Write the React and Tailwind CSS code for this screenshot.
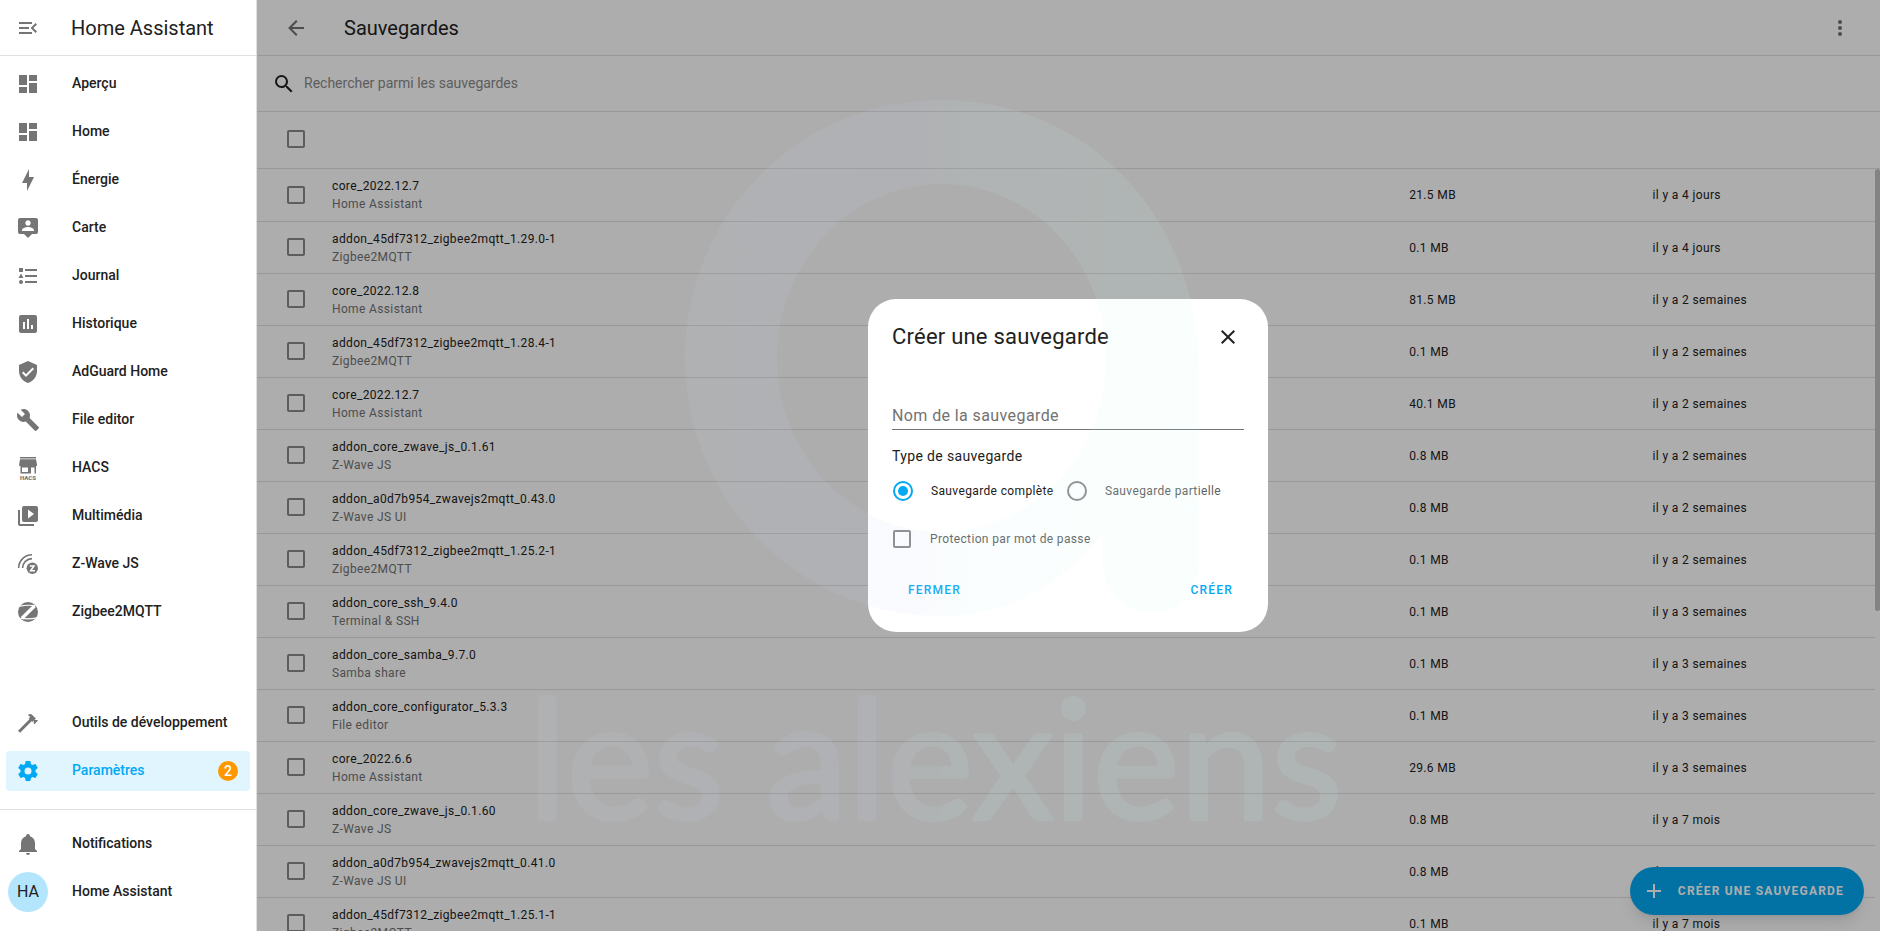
import { useState } from "react";

const ICONS = {
  menuOpen:
    "M21,15.61L19.59,17L14.58,12L19.59,7L21,8.39L17.44,12L21,15.61M3,6H16V8H3V6M3,13V11H13V13H3M3,18V16H16V18H3Z",
  dashboard: "M13,3V9H21V3M13,21H21V11H13M3,21H11V15H3M3,13H11V3H3V13Z",
  bolt: "M11 15H6L13 1V9H18L11 23V15Z",
  map: "M20,2H4A2,2 0 0,0 2,4V16A2,2 0 0,0 4,18H8L12,22L16,18H20A2,2 0 0,0 22,16V4C22,2.89 21.1,2 20,2M12,4.3C13.5,4.3 14.7,5.5 14.7,7C14.7,8.5 13.5,9.7 12,9.7C10.5,9.7 9.3,8.5 9.3,7C9.3,5.5 10.5,4.3 12,4.3M18,15H6V14.1C6,12.1 10,11 12,11C14,11 18,12.1 18,14.1V15Z",
  list: "M5,9.5L7.5,14H2.5L5,9.5M3,4H7V8H3V4M5,20A2,2 0 0,0 7,18A2,2 0 0,0 5,16A2,2 0 0,0 3,18A2,2 0 0,0 5,20M9,5V7H21V5H9M9,19H21V17H9V19M9,13H21V11H9V13Z",
  chart:
    "M19,3H5C3.9,3 3,3.9 3,5V19C3,20.1 3.9,21 5,21H19C20.1,21 21,20.1 21,19V5C21,3.9 20.1,3 19,3M9,17H7V10H9V17M13,17H11V7H13V17M17,17H15V13H17V17Z",
  shield:
    "M10,17L6,13L7.41,11.59L10,14.17L16.59,7.58L18,9M12,1L3,5V11C3,16.55 6.84,21.74 12,23C17.16,21.74 21,16.55 21,11V5L12,1Z",
  wrench:
    "M22.7,19L13.6,9.9C14.5,7.6 14,4.9 12.1,3C10.1,1 7.1,0.6 4.7,1.7L9,6L6,9L1.6,4.7C0.4,7.1 0.9,10.1 2.9,12.1C4.8,14 7.5,14.5 9.8,13.6L18.9,22.7C19.3,23.1 19.9,23.1 20.3,22.7L22.6,20.4C23.1,20 23.1,19.3 22.7,19Z",
  media:
    "M4,6H2V20A2,2 0 0,0 4,22H18V20H4V6M20,2H8A2,2 0 0,0 6,4V16A2,2 0 0,0 8,18H20A2,2 0 0,0 22,16V4A2,2 0 0,0 20,2M12,14.5V5.5L18,10L12,14.5Z",
  hammer:
    "M2 19.63L13.43 8.2L12.72 7.5L14.14 6.07L12 3.89C13.2 2.7 15.09 2.7 16.27 3.89L19.87 7.5L18.45 8.91H21.29L22 9.62L18.45 13.21L17.74 12.5V9.62L16.27 11.04L15.56 10.33L4.13 21.76L2 19.63Z",
  cog: "M12,15.5A3.5,3.5 0 0,1 8.5,12A3.5,3.5 0 0,1 12,8.5A3.5,3.5 0 0,1 15.5,12A3.5,3.5 0 0,1 12,15.5M19.43,12.97C19.47,12.65 19.5,12.33 19.5,12C19.5,11.67 19.47,11.34 19.43,11L21.54,9.37C21.73,9.22 21.78,8.95 21.66,8.73L19.66,5.27C19.54,5.05 19.27,4.96 19.05,5.05L16.56,6.05C16.04,5.66 15.5,5.32 14.87,5.07L14.5,2.42C14.46,2.18 14.25,2 14,2H10C9.75,2 9.54,2.18 9.5,2.42L9.13,5.07C8.5,5.32 7.96,5.66 7.44,6.05L4.95,5.05C4.73,4.96 4.46,5.05 4.34,5.27L2.34,8.73C2.21,8.95 2.27,9.22 2.46,9.37L4.57,11C4.53,11.34 4.5,11.67 4.5,12C4.5,12.33 4.53,12.65 4.57,12.97L2.46,14.63C2.27,14.78 2.21,15.05 2.34,15.27L4.34,18.73C4.46,18.95 4.73,19.03 4.95,18.95L7.44,17.94C7.96,18.34 8.5,18.68 9.13,18.93L9.5,21.58C9.54,21.82 9.75,22 10,22H14C14.25,22 14.46,21.82 14.5,21.58L14.87,18.93C15.5,18.67 16.04,18.34 16.56,17.94L19.05,18.95C19.27,19.03 19.54,18.95 19.66,18.73L21.66,15.27C21.78,15.05 21.73,14.78 21.54,14.63L19.43,12.97Z",
  bell: "M21,19V20H3V19L5,17V11C5,7.9 7.03,5.17 10,4.29C10,4.19 10,4.1 10,4A2,2 0 0,1 12,2A2,2 0 0,1 14,4C14,4.1 14,4.19 14,4.29C16.97,5.17 19,7.9 19,11V17L21,19M14,21A2,2 0 0,1 12,23A2,2 0 0,1 10,21",
  back: "M20,11V13H8L13.5,18.5L12.08,19.92L4.16,12L12.08,4.08L13.5,5.5L8,11H20Z",
  search:
    "M9.5,3A6.5,6.5 0 0,1 16,9.5C16,11.11 15.41,12.59 14.44,13.73L14.71,14H15.5L20.5,19L19,20.5L14,15.5V14.71L13.73,14.44C12.59,15.41 11.11,16 9.5,16A6.5,6.5 0 0,1 3,9.5A6.5,6.5 0 0,1 9.5,3M9.5,5C7,5 5,7 5,9.5C5,12 7,14 9.5,14C12,14 14,12 14,9.5C14,7 12,5 9.5,5Z",
  dots: "M12,16A2,2 0 0,1 14,18A2,2 0 0,1 12,20A2,2 0 0,1 10,18A2,2 0 0,1 12,16M12,10A2,2 0 0,1 14,12A2,2 0 0,1 12,14A2,2 0 0,1 10,12A2,2 0 0,1 12,10M12,4A2,2 0 0,1 14,6A2,2 0 0,1 12,8A2,2 0 0,1 10,6A2,2 0 0,1 12,4Z",
  close:
    "M19,6.41L17.59,5L12,10.59L6.41,5L5,6.41L10.59,12L5,17.59L6.41,19L12,13.41L17.59,19L19,17.59L13.41,12L19,6.41Z",
  plus: "M19,13H13V19H11V13H5V11H11V5H13V11H19V13Z",
};

const NAV_MAIN = [
  { label: "Aperçu", icon: "dashboard" },
  { label: "Home", icon: "dashboard" },
  { label: "Énergie", icon: "bolt" },
  { label: "Carte", icon: "map" },
  { label: "Journal", icon: "list" },
  { label: "Historique", icon: "chart" },
  { label: "AdGuard Home", icon: "shield" },
  { label: "File editor", icon: "wrench" },
  { label: "HACS", icon: "hacs" },
  { label: "Multimédia", icon: "media" },
  { label: "Z-Wave JS", icon: "zwave" },
  { label: "Zigbee2MQTT", icon: "zigbee" },
];

const BACKUPS = [
  { name: "core_2022.12.7", source: "Home Assistant", size: "21.5 MB", date: "il y a 4 jours" },
  { name: "addon_45df7312_zigbee2mqtt_1.29.0-1", source: "Zigbee2MQTT", size: "0.1 MB", date: "il y a 4 jours" },
  { name: "core_2022.12.8", source: "Home Assistant", size: "81.5 MB", date: "il y a 2 semaines" },
  { name: "addon_45df7312_zigbee2mqtt_1.28.4-1", source: "Zigbee2MQTT", size: "0.1 MB", date: "il y a 2 semaines" },
  { name: "core_2022.12.7", source: "Home Assistant", size: "40.1 MB", date: "il y a 2 semaines" },
  { name: "addon_core_zwave_js_0.1.61", source: "Z-Wave JS", size: "0.8 MB", date: "il y a 2 semaines" },
  { name: "addon_a0d7b954_zwavejs2mqtt_0.43.0", source: "Z-Wave JS UI", size: "0.8 MB", date: "il y a 2 semaines" },
  { name: "addon_45df7312_zigbee2mqtt_1.25.2-1", source: "Zigbee2MQTT", size: "0.1 MB", date: "il y a 2 semaines" },
  { name: "addon_core_ssh_9.4.0", source: "Terminal & SSH", size: "0.1 MB", date: "il y a 3 semaines" },
  { name: "addon_core_samba_9.7.0", source: "Samba share", size: "0.1 MB", date: "il y a 3 semaines" },
  { name: "addon_core_configurator_5.3.3", source: "File editor", size: "0.1 MB", date: "il y a 3 semaines" },
  { name: "core_2022.6.6", source: "Home Assistant", size: "29.6 MB", date: "il y a 3 semaines" },
  { name: "addon_core_zwave_js_0.1.60", source: "Z-Wave JS", size: "0.8 MB", date: "il y a 7 mois" },
  { name: "addon_a0d7b954_zwavejs2mqtt_0.41.0", source: "Z-Wave JS UI", size: "0.8 MB", date: "il y a 7 mois" },
  { name: "addon_45df7312_zigbee2mqtt_1.25.1-1", source: "Zigbee2MQTT", size: "0.1 MB", date: "il y a 7 mois" },
];

function Icon({ name, className = "size-6" }) {
  if (name === "hacs") {
    return (
      <svg viewBox="0 0 24 24" className={className} fill="currentColor" aria-hidden="true">
        <path d="M4,1H20V2.5H4ZM4,3.3H20L21,8.5V10H3.2V8.5Z" />
        <path fillRule="evenodd" d="M4.5,10H20V17.5H4.5ZM6,11.5V16H12V11.5ZM15,11.5V17.5H18.5V11.5Z" />
        <text x="12" y="23.5" textAnchor="middle" fontSize="6" fontWeight="900" fontFamily="Roboto, sans-serif">
          HACS
        </text>
      </svg>
    );
  }
  if (name === "zwave") {
    return (
      <svg viewBox="0 0 24 24" className={className} fill="none" stroke="currentColor" aria-hidden="true">
        <path strokeWidth="1.6" d="M2.7,16C2.7,8.7 8.7,2.7 16,2.7M6.6,16C6.6,10.8 10.8,6.6 16,6.6" />
        <circle cx="16.3" cy="16.3" r="5.7" fill="currentColor" stroke="none" />
        <path stroke="white" strokeWidth="1.5" d="M13.8,14H18L14.6,18.7H19" />
      </svg>
    );
  }
  if (name === "zigbee") {
    return (
      <svg viewBox="0 0 24 24" className={className} aria-hidden="true">
        <circle cx="12" cy="12" r="10" fill="currentColor" />
        <path fill="none" stroke="white" strokeWidth="1.2" d="M4,6.2C9,5 14,5 19.5,5.6M4.5,18.4C11,19.2 16,19 20.5,17.8" />
        <path stroke="white" strokeWidth="3.4" d="M18.5,6L6,18.2" />
      </svg>
    );
  }
  return (
    <svg viewBox="0 0 24 24" className={className} fill="currentColor" fillRule="evenodd" aria-hidden="true">
      <path d={ICONS[name]} />
    </svg>
  );
}

function NavItem({ icon, label, active, badge }) {
  return (
    <a
      href="#"
      aria-current={active ? "page" : undefined}
      className={`mx-1.5 flex h-10 items-center rounded px-2.5 ${active ? "bg-[#e1f5fe] text-[#03a9f4]" : "text-[#212121]"}`}
    >
      <Icon name={icon} className={`size-6 shrink-0 ${active ? "" : "text-[#757575]"}`} />
      <span className="ml-8 flex-1 pb-0.5 whitespace-nowrap">{label}</span>
      {badge && (
        <span className="mr-0.5 flex size-5 items-center justify-center rounded-full bg-[#ff9800] text-white">{badge}</span>
      )}
    </a>
  );
}

function Sidebar() {
  return (
    <aside className="flex w-[257px] shrink-0 flex-col border-r border-[#e0e0e0] bg-white text-sm font-medium">
      <div className="flex h-14 shrink-0 items-center border-b border-[#e0e0e0] px-4">
        <button type="button" aria-label="Réduire le menu" className="text-[#757575]">
          <Icon name="menuOpen" />
        </button>
        <span className="ml-[31px] text-xl font-normal text-[#212121]">Home Assistant</span>
      </div>
      <nav className="flex flex-1 flex-col gap-2 py-2">
        {NAV_MAIN.map((item) => (
          <NavItem key={item.label} {...item} />
        ))}
        <div className="flex-1" />
        <NavItem icon="hammer" label="Outils de développement" />
        <NavItem icon="cog" label="Paramètres" active badge={2} />
      </nav>
      <div className="mt-2.5 flex flex-col gap-2 border-t border-[#e0e0e0] pt-3.5 pb-[19px]">
        <NavItem icon="bell" label="Notifications" />
        <a href="#" className="flex h-10 items-center px-2 text-[#212121]">
          <span className="flex size-10 items-center justify-center rounded-full bg-[#b3e5fc] text-base font-normal">HA</span>
          <span className="ml-6 pb-0.5">Home Assistant</span>
        </a>
      </div>
    </aside>
  );
}

const checkboxClass = "block size-[18px] shrink-0 appearance-none rounded-xs border-2 border-[#8a8a8a]";

function BackupTable() {
  return (
    <div className="relative min-h-0 flex-1 overflow-hidden">
      <table className="w-full table-fixed border-separate border-spacing-0 text-left text-xs tracking-[0.03em] text-[#212121]">
        <colgroup>
          <col className="w-[59px]" />
          <col />
          <col className="w-[15%]" />
          <col className="w-[15%]" />
        </colgroup>
        <thead>
          <tr>
            <th className="h-[57px] border-b border-[#e0e0e0] pb-0.5 pl-[30px]">
              <input type="checkbox" aria-label="Tout sélectionner" className={checkboxClass} />
            </th>
            <th colSpan={3} className="border-b border-[#e0e0e0]" />
          </tr>
        </thead>
        <tbody>
          {BACKUPS.map((backup, index) => {
            const border = index > 0 ? "border-t border-[#e0e0e0]" : "";
            return (
              <tr key={index} className="h-[52px]">
                <td className={`${border} pb-px pl-[30px]`}>
                  <input type="checkbox" aria-label={backup.name} className={checkboxClass} />
                </td>
                <td className={`${border} pl-4`}>
                  <div className="leading-[18px]">{backup.name}</div>
                  <div className="leading-[18px] text-[#727272]">{backup.source}</div>
                </td>
                <td className={`${border} px-4`}>{backup.size}</td>
                <td className={`${border} px-4`}>{backup.date}</td>
              </tr>
            );
          })}
        </tbody>
      </table>
      <div className="absolute top-[57px] right-0 bottom-0 w-[5px] bg-white">
        <div className="h-[58%] rounded bg-[#c1c1c1]" />
      </div>
    </div>
  );
}

function BackupDialog() {
  const [type, setType] = useState("full");

  return (
    <div
      role="dialog"
      aria-labelledby="dialog-title"
      className="w-[400px] rounded-[28px] bg-white p-6 text-xs tracking-[0.03em] text-[#212121]"
    >
      <div className="flex h-7 items-center justify-between pr-1">
        <h2 id="dialog-title" className="text-[22px] tracking-[0.01em]">Créer une sauvegarde</h2>
        <button type="button" aria-label="Fermer la fenêtre">
          <Icon name="close" />
        </button>
      </div>

      <input
        type="text"
        aria-label="Nom de la sauvegarde"
        placeholder="Nom de la sauvegarde"
        className="mt-12 block h-[31px] w-full border-b border-[#757575] pt-0.5 text-base tracking-wide outline-none placeholder:text-[#727272]"
      />

      <fieldset>
        <legend className="pt-4 text-sm">Type de sauvegarde</legend>
        <div className="mt-[13px] flex h-6 items-center">
          {[
            { value: "full", label: "Sauvegarde complète", width: "w-[174px]", color: "text-[#212121]" },
            { value: "partial", label: "Sauvegarde partielle", width: "", color: "text-[#5f5f5f]" },
          ].map((option) => (
            <label key={option.value} className={`flex items-center whitespace-nowrap ${option.width} ${option.color}`}>
              <input
                type="radio"
                name="backup-type"
                checked={type === option.value}
                onChange={() => setType(option.value)}
                className="ml-px size-5 appearance-none rounded-full border-2 border-[#8a8a8a] bg-clip-content p-[3px] checked:border-[#03a9f4] checked:bg-[#03a9f4]"
              />
              <span className="ml-[18px]">{option.label}</span>
            </label>
          ))}
        </div>
      </fieldset>

      <label className="mt-6 flex h-6 items-center text-[#5f5f5f]">
        <input type="checkbox" className={`ml-px ${checkboxClass}`} />
        <span className="ml-[19px]">Protection par mot de passe</span>
      </label>

      <div className="mt-[21px] flex h-9 items-center justify-between pr-[11px] pl-4 font-medium text-[#03a9f4]">
        <button type="button" className="tracking-widest uppercase">Fermer</button>
        <button type="button" className="tracking-widest uppercase">Créer</button>
      </div>
    </div>
  );
}

function Watermark() {
  return (
    <svg viewBox="0 0 1880 931" className="pointer-events-none absolute inset-0 size-full" aria-hidden="true">
      <defs>
        <linearGradient id="mark" gradientUnits="userSpaceOnUse" x1="685" y1="0" x2="1199" y2="0">
          <stop offset="0" stopColor="#c8d5eb" />
          <stop offset="0.45" stopColor="#ccd3f5" />
          <stop offset="0.55" stopColor="#c8f0f0" />
          <stop offset="1" stopColor="#c8fff5" />
        </linearGradient>
        <linearGradient id="word" gradientUnits="userSpaceOnUse" x1="536" y1="0" x2="1340" y2="0">
          <stop offset="0" stopColor="#c8d5eb" />
          <stop offset="0.42" stopColor="#ccd3f5" />
          <stop offset="0.52" stopColor="#c8f5f5" />
          <stop offset="1" stopColor="#c8fff5" />
        </linearGradient>
      </defs>
      <path
        fill="url(#mark)"
        fillRule="evenodd"
        opacity="0.1"
        d="M942,100C1086,100 1199,215 1199,372V565A48,48 0 0 1 1103,565V533C1062,586 1005,616 942,616C798,616 685,500 685,358C685,216 798,100 942,100ZM942,184C851,184 777,262 777,358C777,454 851,532 942,532C1033,532 1106,454 1106,358C1106,262 1033,184 942,184Z"
      />
      <text
        x="528"
        y="819"
        fontFamily="Lato, sans-serif"
        fontSize="164"
        fill="url(#word)"
        stroke="url(#word)"
        strokeWidth="4"
        strokeLinejoin="round"
        opacity="0.1"
      >
        les alexiens
      </text>
    </svg>
  );
}

export default function App() {
  return (
    <div className="relative flex h-screen overflow-hidden bg-white font-['Roboto',sans-serif]">
      <Sidebar />

      <main className="relative flex min-w-0 flex-1 flex-col">
        <header className="flex h-14 shrink-0 items-center border-b border-[#e0e0e0] pr-7 pl-[27px]">
          <button type="button" aria-label="Retour" className="text-[#727272]">
            <Icon name="back" />
          </button>
          <h1 className="ml-9 flex-1 text-xl text-[#212121]">Sauvegardes</h1>
          <button type="button" aria-label="Plus d'options" className="text-[#727272]">
            <Icon name="dots" />
          </button>
        </header>

        <label className="flex h-14 shrink-0 items-center border-b border-[#e0e0e0] px-[15px] text-[#212121]">
          <Icon name="search" />
          <input
            type="search"
            placeholder="Rechercher parmi les sauvegardes"
            className="ml-2 flex-1 pb-0.5 text-sm outline-none placeholder:text-[#8a8a8a]"
          />
        </label>

        <BackupTable />

        <button
          type="button"
          className="absolute right-4 bottom-4 flex h-12 items-center rounded-full bg-[#03a9f4] pr-5 pl-3 text-xs font-bold tracking-widest text-white uppercase shadow-lg"
        >
          <Icon name="plus" />
          <span className="ml-3">Créer une sauvegarde</span>
        </button>

        <div className="absolute inset-0 flex items-center justify-center bg-black/32 pr-px">
          <BackupDialog />
        </div>
      </main>

      <Watermark />
    </div>
  );
}
